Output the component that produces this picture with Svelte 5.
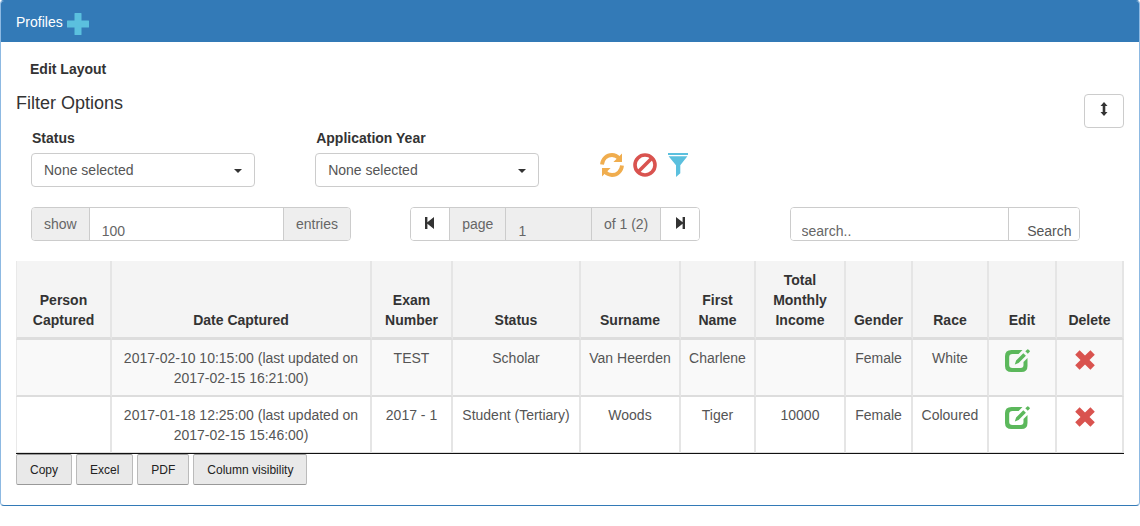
<script>
  const years = ['None selected'];
  const statuses = ['None selected'];

  const columns = [
    { title: 'Person Captured', width: 96 },
    { title: 'Date Captured', width: 260 },
    { title: 'Exam Number', width: 81 },
    { title: 'Status', width: 128 },
    { title: 'Surname', width: 100 },
    { title: 'First Name', width: 75 },
    { title: 'Total Monthly Income', width: 90 },
    { title: 'Gender', width: 67 },
    { title: 'Race', width: 76 },
    { title: 'Edit', width: 68 },
    { title: 'Delete', width: 67 }
  ];
  const totalWidth = columns.reduce((sum, c) => sum + c.width, 0);

  const rows = [
    ['', '2017-02-10 10:15:00 (last updated on 2017-02-15 16:21:00)', 'TEST', 'Scholar', 'Van Heerden', 'Charlene', '', 'Female', 'White'],
    ['', '2017-01-18 12:25:00 (last updated on 2017-02-15 15:46:00)', '2017 - 1', 'Student (Tertiary)', 'Woods', 'Tiger', '10000', 'Female', 'Coloured']
  ];

  const exportButtons = ['Copy', 'Excel', 'PDF', 'Column visibility'];

  let search = $state('');
  let pageSize = $state('100');
</script>

<section class="panel">
  <header class="panel-heading">
    <span>Profiles</span>
    <button class="icon-button add" type="button" aria-label="Add profile">
      <svg width="22" height="22" viewBox="0 0 22 22"><path fill="#5bc0de" d="M8 0h6q.5 0 .5.5v7h7q.5 0 .5.5v6q0 .5-.5.5h-7v7q0 .5-.5.5H8q-.5 0-.5-.5v-7h-7Q0 14.500 0 14V8q0-.5.5-.5h7v-7Q7.500 0 8 0z" /></svg>
    </button>
  </header>

  <div class="panel-body">
    <button class="edit-layout" type="button">Edit Layout</button>

    <div class="filter-head">
      <h4>Filter Options</h4>
      <button class="btn toggle" type="button" aria-label="Toggle filters">
        <svg width="8" height="14" viewBox="0 0 8 14"><path fill="#333" d="M4 0l3.500 4H5.300v6h2.200L4 14 .5 10h2.200V4H.5z" /></svg>
      </button>
    </div>

    <div class="filters">
      <div class="field">
        <label for="status">Status</label>
        <div class="select">
          <select id="status">
            {#each statuses as s}<option>{s}</option>{/each}
          </select>
          <svg class="caret" width="8" height="4" viewBox="0 0 8 4"><path fill="#333" d="M0 0h8L4 4z" /></svg>
        </div>
      </div>
      <div class="field">
        <label for="year">Application Year</label>
        <div class="select">
          <select id="year">
            {#each years as y}<option>{y}</option>{/each}
          </select>
          <svg class="caret" width="8" height="4" viewBox="0 0 8 4"><path fill="#333" d="M0 0h8L4 4z" /></svg>
        </div>
      </div>
      <div class="filter-actions">
        <button class="icon-button" type="button" aria-label="Refresh">
          <svg width="24" height="24" viewBox="0 0 24 24">
            <g fill="none" stroke="#f0ad4e" stroke-width="3.800">
              <path d="M2 11.500C2.400 6 6.800 2 12 2c2.900 0 5.200 1.200 7 3.200" />
              <path d="M22 12.500C21.600 18 17.200 22 12 22c-2.900 0-5.200-1.200-7-3.200" />
            </g>
            <path fill="#f0ad4e" d="M22 .6v8.400h-8.600zM2 23.400V15h8.600z" />
          </svg>
        </button>
        <button class="icon-button" type="button" aria-label="Clear filters">
          <svg width="24" height="24" viewBox="0 0 24 24">
            <g fill="none" stroke="#d9534f" stroke-width="3.600">
              <circle cx="12" cy="12" r="10" />
              <path d="M5 19L19 5" />
            </g>
          </svg>
        </button>
        <button class="icon-button" type="button" aria-label="Apply filter">
          <svg width="24" height="24" viewBox="0 0 24 24">
            <path fill="#5bc0de" d="M2 0h20v2H2zM2.600 3.200h18.800l-7.100 9v8L10 24V12.200z" />
          </svg>
        </button>
      </div>
    </div>

    <div class="controls">
      <div class="group wide">
        <label class="addon" for="page-size">show</label>
        <input id="page-size" type="text" bind:value={pageSize} />
        <span class="addon">entries</span>
      </div>
      <div class="group">
        <button class="group-btn" type="button" aria-label="First page">
          <svg width="10" height="12" viewBox="0 0 10 12"><path fill="#333" d="M0 0h2.400v5.300L9 0v12L2.400 6.700V12H0z" /></svg>
        </button>
        <label class="addon" for="page">page</label>
        <input id="page" type="text" value="1" disabled />
        <span class="addon">of 1 (2)</span>
        <button class="group-btn" type="button" aria-label="Last page">
          <svg width="10" height="12" viewBox="0 0 10 12"><path fill="#333" d="M10 0H7.600v5.300L1 0v12l6.600-5.300V12H10z" /></svg>
        </button>
      </div>
      <div class="group">
        <input class="search-box" type="text" placeholder="search.." aria-label="search" bind:value={search} />
        <button class="group-btn search" type="button">Search</button>
      </div>
    </div>

    <table>
      <colgroup>
        {#each columns as c}<col style:width="{(c.width / totalWidth) * 100}%" />{/each}
      </colgroup>
      <thead>
        <tr>
          {#each columns as c}<th scope="col">{c.title}</th>{/each}
        </tr>
      </thead>
      <tbody>
        {#each rows as row}
          <tr>
            {#each row as cell}<td>{cell}</td>{/each}
            <td>
              <button class="icon-button row-action" type="button" aria-label="Edit">
                <svg width="25" height="24" viewBox="0 0 25 24">
                  <path fill="#5cb85c" d="M6.500 1H17.500L13.600 5H7.500Q4.200 5 4.200 8.200V16Q4.200 19 7.500 19H15.500Q18.500 19 18.500 16V13L22.500 9V17Q22.500 23 16.500 23H6.500Q0 23 0 17V7Q0 1 6.500 1z" />
                  <path fill="#5cb85c" d="M18.300 4.200l2.600 2.500-7.300 7.300-3.800 1.400 1.300-4zM22.300.4q.5-.5 1 0l1.400 1.400q.5.500 0 1l-1.900 1.900-2.500-2.400z" />
                </svg>
              </button>
            </td>
            <td>
              <button class="icon-button row-action" type="button" aria-label="Delete">
                <svg width="20" height="24" viewBox="0 0 20 24">
                  <path fill="#d9534f" d="M4.600 1.300L10 6.600l5.400-5.300 4.400 4.400L14.500 11l5.300 5.300-4.400 4.400L10 15.400l-5.400 5.300-4.400-4.400L5.500 11 .2 5.700z" />
                </svg>
              </button>
            </td>
          </tr>
        {/each}
      </tbody>
    </table>

    <div class="exports">
      {#each exportButtons as label}<button type="button">{label}</button>{/each}
    </div>
  </div>
</section>

<style>
  :global(body) {
    background: #fff;
    color: #333;
    font: 14px/20px "Liberation Sans", Arial, sans-serif;
  }
  .panel,
  .panel :global(*) {
    box-sizing: border-box;
  }
  button,
  input,
  select {
    font: inherit;
    color: inherit;
    margin: 0;
  }
  svg {
    display: block;
  }
  .panel {
    border: 1px solid #337ab7;
    border-left-color: #8db9e2;
    border-right-color: #8db9e2;
    border-radius: 4px;
  }
  .panel-heading {
    display: flex;
    align-items: center;
    gap: 4px;
    height: 41px;
    padding: 0 15px;
    background: #337ab7;
    color: #fff;
    border-radius: 3px 3px 0 0;
  }
  .icon-button {
    display: block;
    padding: 0;
    border: 0;
    background: none;
    cursor: pointer;
  }
  .icon-button.add {
    padding-top: 4px;
  }
  .panel-body {
    padding: 17px 15px 20px;
  }
  .edit-layout {
    display: block;
    padding: 0 14px;
    border: 0;
    background: none;
    font-weight: bold;
  }
  .filter-head {
    display: flex;
    justify-content: space-between;
    align-items: flex-start;
    margin-top: 15px;
  }
  h4 {
    margin: 0;
    font-size: 18px;
    font-weight: normal;
    line-height: 18px;
  }
  .btn {
    display: flex;
    justify-content: center;
    width: 40px;
    height: 34px;
    padding: 7px 0 0;
    border: 1px solid #ccc;
    border-radius: 4px;
    background: #fff;
  }
  .filters {
    display: grid;
    grid-template-columns: 26% 26% 1fr;
    padding-left: 15px;
  }
  .field {
    padding-right: 60px;
  }
  .field label {
    display: block;
    margin-bottom: 5px;
    padding-left: 1px;
    font-weight: bold;
  }
  .select {
    position: relative;
  }
  select {
    display: block;
    width: 100%;
    height: 34px;
    padding: 0 12px;
    border: 1px solid #ccc;
    border-radius: 4px;
    background: #fff;
    color: #555;
    appearance: none;
  }
  .caret {
    position: absolute;
    right: 13px;
    top: 16px;
    pointer-events: none;
  }
  .filter-actions {
    display: flex;
    align-items: flex-start;
    gap: 9px;
    padding: 25px 0 0 1px;
  }
  .controls {
    display: grid;
    grid-template-columns: 347fr 347fr 306fr;
    margin: 20px 0;
    padding-left: 15px;
  }
  .group {
    display: flex;
    width: 290px;
    max-width: 100%;
    height: 34px;
    border: 1px solid #ccc;
    border-radius: 4px;
    overflow: hidden;
    color: #555;
  }
  .group.wide {
    width: 320px;
  }
  .addon {
    flex: none;
    padding: 6px 12px;
    background: #eee;
    color: #666;
  }
  .group input {
    flex: 1;
    min-width: 0;
    padding: 14px 12px 0;
    border: solid #ccc;
    border-width: 0 1px;
    border-radius: 0;
    background: #fff;
    color: #666;
  }
  .group input.search-box {
    padding-left: 11px;
    border-left: 0;
  }
  .group input::placeholder {
    color: #666;
    opacity: 1;
  }
  .group input:disabled {
    background: #eee;
  }
  .group-btn {
    display: flex;
    flex: none;
    justify-content: center;
    width: 39px;
    padding: 9px 0 0;
    border: 0 solid #ccc;
    border-radius: 0;
    background: #fff;
  }
  .group-btn:first-child {
    border-right-width: 1px;
  }
  .addon + .group-btn {
    border-left-width: 1px;
  }
  .group-btn.search {
    width: 70px;
    padding: 13px 7px 0 0;
    justify-content: flex-end;
  }
  table {
    width: 100%;
    table-layout: fixed;
    border-collapse: separate;
    border-spacing: 0;
    border-bottom: 1px solid #111;
    text-align: center;
  }
  th,
  td {
    border-right: 2px solid #e5e5e5;
  }
  th:first-child,
  td:first-child {
    border-left: 1px solid #e9e9e9;
  }
  th {
    padding: 9px 6px 7px;
    border-bottom: 3px solid #ddd;
    background: #f4f4f4;
    vertical-align: bottom;
  }
  td {
    height: 57px;
    padding: 8px 7px 7px;
    border-bottom: 2px solid #ddd;
    color: #555;
    vertical-align: top;
  }
  tbody tr:nth-child(odd) td {
    background: #f9f9f9;
  }
  tbody tr:last-child td {
    height: 56px;
    border-bottom: 1px solid #ddd;
  }
  .icon-button.row-action {
    margin: 0 auto;
    padding: 1px 9px 0 0;
  }
  .exports {
    display: flex;
    gap: 4px;
  }
  .exports button {
    height: 31px;
    padding: 0 13px;
    border: 1px solid #999;
    border-left-color: #bbb;
    border-right-color: #bbb;
    border-radius: 2px;
    background: #e9e9e9;
    color: #222;
    font-size: 12px;
  }
</style>
